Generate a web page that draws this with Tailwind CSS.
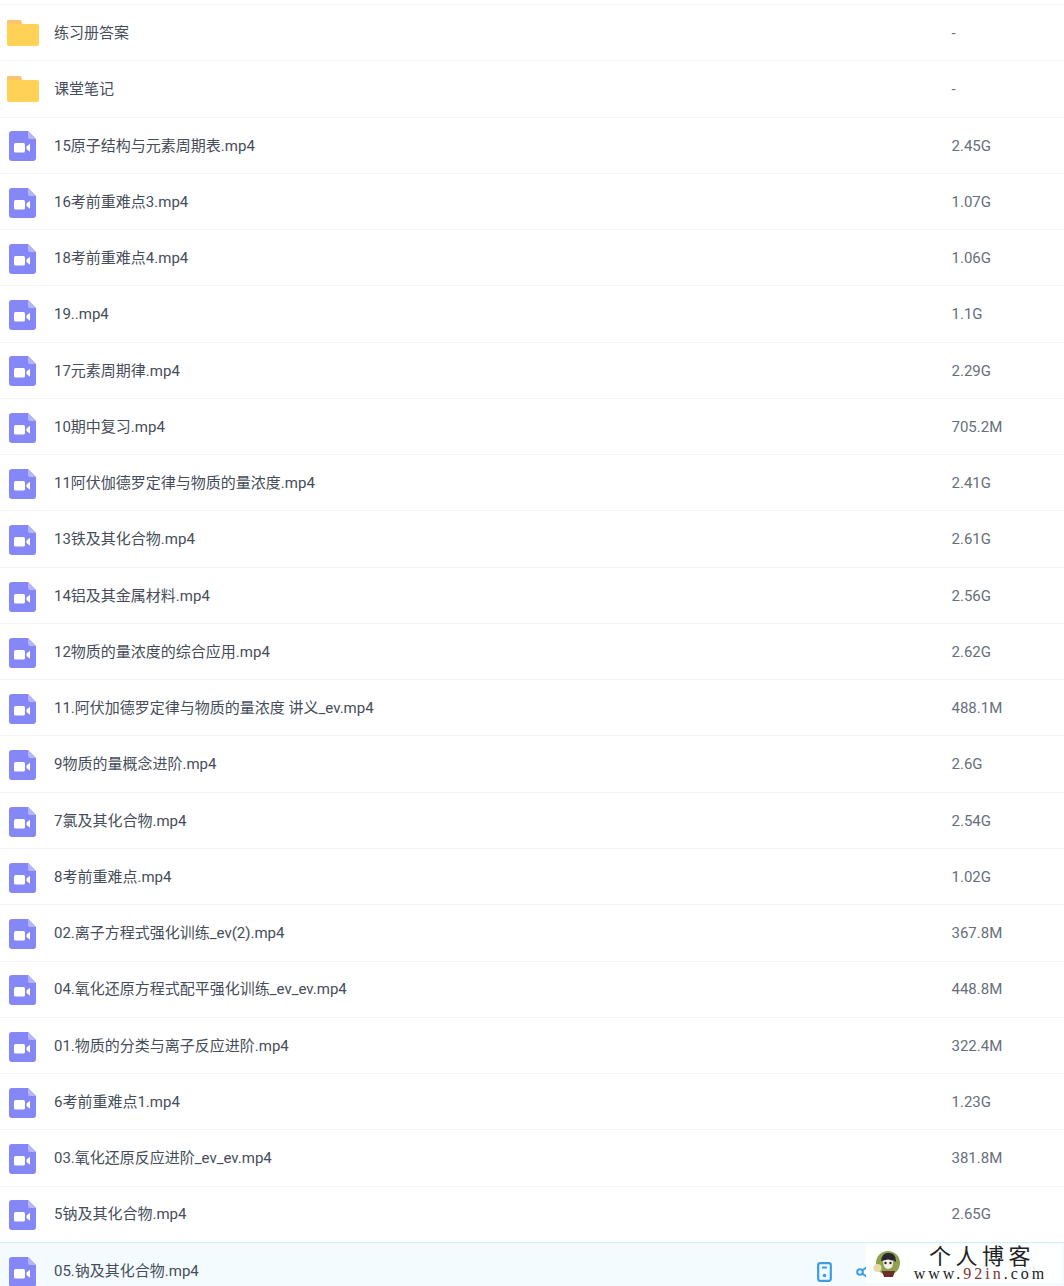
<!DOCTYPE html>
<html lang="zh">
<head>
<meta charset="utf-8">
<script src="https://cdn.jsdelivr.net/npm/@tailwindcss/browser@4"></script>
</head>
<body class="bg-white">
<svg class="hidden" width="0" height="0">
<symbol id="video" viewBox="0 0 27 30">
<path d="M3 0H19L27 8V27Q27 30 24 30H3Q0 30 0 27V3Q0 0 3 0Z" fill="#8587f6"/>
<path d="M19 0L27 8H21Q19 8 19 6Z" fill="#b4b6fa"/>
<rect x="5" y="12" width="11" height="9.5" rx="1.5" fill="#fff"/>
<path d="M17.5 15.5L21 12.8V20.7L17.5 18Z" fill="#fff"/>
</symbol>
<symbol id="folder" viewBox="0 0 32 26">
<path d="M1 0H13Q15 0 15 4H0V1Q0 0 1 0Z" fill="#fbc56f"/>
<path d="M0 4H30Q32 4 32 6V24Q32 26 30 26H2Q0 26 0 24Z" fill="#ffd257"/>
</symbol>
</svg>
<main class="relative h-[1286px] w-[1064px] overflow-hidden pt-[4px] text-[15px] text-[#454d5a] [font-family:Roboto,'Noto_Sans_CJK_SC',sans-serif]">
<ul class="border-t border-[#f1f3f8]">
<li class="flex h-[56.27px] items-center border-b border-[#f1f3f8]"><svg class="ml-[7px] h-[26px] w-[32px] shrink-0"><use href="#folder"/></svg><span class="ml-[15px] flex-1 pt-[1px]">练习册答案</span><span class="w-[112.5px] pt-[1px] text-[#666f7b]">-</span></li>
<li class="flex h-[56.27px] items-center border-b border-[#f1f3f8]"><svg class="ml-[7px] h-[26px] w-[32px] shrink-0"><use href="#folder"/></svg><span class="ml-[15px] flex-1 pt-[1px]">课堂笔记</span><span class="w-[112.5px] pt-[1px] text-[#666f7b]">-</span></li>
<li class="flex h-[56.27px] items-center border-b border-[#f1f3f8]"><svg class="ml-[9px] mt-[2.5px] h-[30px] w-[27px] shrink-0"><use href="#video"/></svg><span class="ml-[18px] flex-1 pt-[1.6px]">15原子结构与元素周期表.mp4</span><span class="w-[112.5px] pt-[1.6px] text-[#666f7b]">2.45G</span></li>
<li class="flex h-[56.27px] items-center border-b border-[#f1f3f8]"><svg class="ml-[9px] mt-[2.5px] h-[30px] w-[27px] shrink-0"><use href="#video"/></svg><span class="ml-[18px] flex-1 pt-[1px]">16考前重难点3.mp4</span><span class="w-[112.5px] pt-[1px] text-[#666f7b]">1.07G</span></li>
<li class="flex h-[56.27px] items-center border-b border-[#f1f3f8]"><svg class="ml-[9px] mt-[2.5px] h-[30px] w-[27px] shrink-0"><use href="#video"/></svg><span class="ml-[18px] flex-1 pt-[1px]">18考前重难点4.mp4</span><span class="w-[112.5px] pt-[1px] text-[#666f7b]">1.06G</span></li>
<li class="flex h-[56.27px] items-center border-b border-[#f1f3f8]"><svg class="ml-[9px] mt-[2.5px] h-[30px] w-[27px] shrink-0"><use href="#video"/></svg><span class="ml-[18px] flex-1 pt-[1px]">19..mp4</span><span class="w-[112.5px] pt-[1px] text-[#666f7b]">1.1G</span></li>
<li class="flex h-[56.27px] items-center border-b border-[#f1f3f8]"><svg class="ml-[9px] mt-[2.5px] h-[30px] w-[27px] shrink-0"><use href="#video"/></svg><span class="ml-[18px] flex-1 pt-[1.6px]">17元素周期律.mp4</span><span class="w-[112.5px] pt-[1.6px] text-[#666f7b]">2.29G</span></li>
<li class="flex h-[56.27px] items-center border-b border-[#f1f3f8]"><svg class="ml-[9px] mt-[2.5px] h-[30px] w-[27px] shrink-0"><use href="#video"/></svg><span class="ml-[18px] flex-1 pt-[1px]">10期中复习.mp4</span><span class="w-[112.5px] pt-[1px] text-[#666f7b]">705.2M</span></li>
<li class="flex h-[56.27px] items-center border-b border-[#f1f3f8]"><svg class="ml-[9px] mt-[2.5px] h-[30px] w-[27px] shrink-0"><use href="#video"/></svg><span class="ml-[18px] flex-1 pt-[1px]">11阿伏伽德罗定律与物质的量浓度.mp4</span><span class="w-[112.5px] pt-[1px] text-[#666f7b]">2.41G</span></li>
<li class="flex h-[56.27px] items-center border-b border-[#f1f3f8]"><svg class="ml-[9px] mt-[2.5px] h-[30px] w-[27px] shrink-0"><use href="#video"/></svg><span class="ml-[18px] flex-1 pt-[1px]">13铁及其化合物.mp4</span><span class="w-[112.5px] pt-[1px] text-[#666f7b]">2.61G</span></li>
<li class="flex h-[56.27px] items-center border-b border-[#f1f3f8]"><svg class="ml-[9px] mt-[2.5px] h-[30px] w-[27px] shrink-0"><use href="#video"/></svg><span class="ml-[18px] flex-1 pt-[1px]">14铝及其金属材料.mp4</span><span class="w-[112.5px] pt-[1px] text-[#666f7b]">2.56G</span></li>
<li class="flex h-[56.27px] items-center border-b border-[#f1f3f8]"><svg class="ml-[9px] mt-[2.5px] h-[30px] w-[27px] shrink-0"><use href="#video"/></svg><span class="ml-[18px] flex-1 pt-[1px]">12物质的量浓度的综合应用.mp4</span><span class="w-[112.5px] pt-[1px] text-[#666f7b]">2.62G</span></li>
<li class="flex h-[56.27px] items-center border-b border-[#f1f3f8]"><svg class="ml-[9px] mt-[2.5px] h-[30px] w-[27px] shrink-0"><use href="#video"/></svg><span class="ml-[18px] flex-1 pt-[1px]">11.阿伏加德罗定律与物质的量浓度 讲义_ev.mp4</span><span class="w-[112.5px] pt-[1px] text-[#666f7b]">488.1M</span></li>
<li class="flex h-[56.27px] items-center border-b border-[#f1f3f8]"><svg class="ml-[9px] mt-[2.5px] h-[30px] w-[27px] shrink-0"><use href="#video"/></svg><span class="ml-[18px] flex-1 pt-[1px]">9物质的量概念进阶.mp4</span><span class="w-[112.5px] pt-[1px] text-[#666f7b]">2.6G</span></li>
<li class="flex h-[56.27px] items-center border-b border-[#f1f3f8]"><svg class="ml-[9px] mt-[2.5px] h-[30px] w-[27px] shrink-0"><use href="#video"/></svg><span class="ml-[18px] flex-1 pt-[1px]">7氯及其化合物.mp4</span><span class="w-[112.5px] pt-[1px] text-[#666f7b]">2.54G</span></li>
<li class="flex h-[56.27px] items-center border-b border-[#f1f3f8]"><svg class="ml-[9px] mt-[2.5px] h-[30px] w-[27px] shrink-0"><use href="#video"/></svg><span class="ml-[18px] flex-1 pt-[1px]">8考前重难点.mp4</span><span class="w-[112.5px] pt-[1px] text-[#666f7b]">1.02G</span></li>
<li class="flex h-[56.27px] items-center border-b border-[#f1f3f8]"><svg class="ml-[9px] mt-[2.5px] h-[30px] w-[27px] shrink-0"><use href="#video"/></svg><span class="ml-[18px] flex-1 pt-[1px]">02.离子方程式强化训练_ev(2).mp4</span><span class="w-[112.5px] pt-[1px] text-[#666f7b]">367.8M</span></li>
<li class="flex h-[56.27px] items-center border-b border-[#f1f3f8]"><svg class="ml-[9px] mt-[2.5px] h-[30px] w-[27px] shrink-0"><use href="#video"/></svg><span class="ml-[18px] flex-1 pt-[1px]">04.氧化还原方程式配平强化训练_ev_ev.mp4</span><span class="w-[112.5px] pt-[1px] text-[#666f7b]">448.8M</span></li>
<li class="flex h-[56.27px] items-center border-b border-[#f1f3f8]"><svg class="ml-[9px] mt-[2.5px] h-[30px] w-[27px] shrink-0"><use href="#video"/></svg><span class="ml-[18px] flex-1 pt-[1px]">01.物质的分类与离子反应进阶.mp4</span><span class="w-[112.5px] pt-[1px] text-[#666f7b]">322.4M</span></li>
<li class="flex h-[56.27px] items-center border-b border-[#f1f3f8]"><svg class="ml-[9px] mt-[2.5px] h-[30px] w-[27px] shrink-0"><use href="#video"/></svg><span class="ml-[18px] flex-1 pt-[1px]">6考前重难点1.mp4</span><span class="w-[112.5px] pt-[1px] text-[#666f7b]">1.23G</span></li>
<li class="flex h-[56.27px] items-center border-b border-[#f1f3f8]"><svg class="ml-[9px] mt-[2.5px] h-[30px] w-[27px] shrink-0"><use href="#video"/></svg><span class="ml-[18px] flex-1 pt-[1px]">03.氧化还原反应进阶_ev_ev.mp4</span><span class="w-[112.5px] pt-[1px] text-[#666f7b]">381.8M</span></li>
<li class="flex h-[56.27px] items-center border-b border-[#d5ecfb]"><svg class="ml-[9px] mt-[2.5px] h-[30px] w-[27px] shrink-0"><use href="#video"/></svg><span class="ml-[18px] flex-1 pt-[1px]">5钠及其化合物.mp4</span><span class="w-[112.5px] pt-[1px] text-[#666f7b]">2.65G</span></li>
<li class="flex h-[56.27px] items-center bg-[#f4fbff]"><svg class="ml-[9px] mt-[2.5px] h-[30px] w-[27px] shrink-0"><use href="#video"/></svg><span class="ml-[18px] flex-1 pt-[1px]">05.钠及其化合物.mp4</span>
<div class="mr-[28px] mt-[3px] flex items-center">
<svg class="mr-[24.5px] h-[20px] w-[15px] shrink-0" viewBox="0 0 15 20" fill="none"><rect x="1.2" y="1.2" width="12.6" height="17.6" rx="2" stroke="#3c9ce6" stroke-width="2.2"/><path d="M5 5.5H10" stroke="#3c9ce6" stroke-width="2"/><circle cx="7.5" cy="13.5" r="1.8" fill="#3c9ce6"/></svg>
<svg class="mr-[106px] h-[14px] w-[14px] shrink-0" viewBox="0 0 14 14" fill="none"><circle cx="4" cy="7" r="2.8" stroke="#3c9ce6" stroke-width="2"/><path d="M6.5 5.2L11 2M6.5 8.8L11 12" stroke="#3c9ce6" stroke-width="2"/></svg>
<svg class="mr-[28px] h-[16px] w-[16px] shrink-0" viewBox="0 0 16 16" fill="none" stroke="#3c9ce6" stroke-width="2"><path d="M8 1V10M4 7L8 11L12 7M2 14H14"/></svg>
<svg class="h-[16px] w-[16px] shrink-0" viewBox="0 0 16 16" fill="none" stroke="#3c9ce6" stroke-width="2"><path d="M2 3V13H14V3M6 3V9H10V3"/></svg>
</div>
</li>
</ul>
<aside class="absolute left-[866px] top-[1244px] flex h-[39px] w-[196px] items-center bg-white/90 pl-[7px]">
<svg class="h-[28px] w-[28px] shrink-0" viewBox="0 0 28 28">
<circle cx="15" cy="13" r="12" fill="#8fa14d"/>
<path d="M8 11Q9 2 16 3Q23 3 23 12L20 10L17 12L13 10Z" fill="#2b2630"/>
<path d="M10 11Q15 8 20 11Q21 18 15 19Q10 18 10 11Z" fill="#f4efe6"/>
<circle cx="12.5" cy="13" r="1.2" fill="#222"/><circle cx="17.5" cy="13" r="1.2" fill="#222"/>
<path d="M9 21H22L20 27H11Z" fill="#6b2f2a"/>
<circle cx="4.5" cy="18" r="4" fill="#e8d9a8"/>
</svg>
<div class="ml-[5px] flex w-[146px] flex-col items-center leading-none [font-family:'Liberation_Serif','Noto_Sans_CJK_SC',serif]">
<span class="pl-[6px] text-[22px] leading-[21px] tracking-[4.5px] text-[#222]">个人博客</span>
<span class="pl-[3px] text-[16px] leading-[14px] tracking-[3px] text-[#222]">www.<span class="text-[#7d3530]">92in</span>.com</span>
</div>
</aside>
</main>
</body>
</html>
